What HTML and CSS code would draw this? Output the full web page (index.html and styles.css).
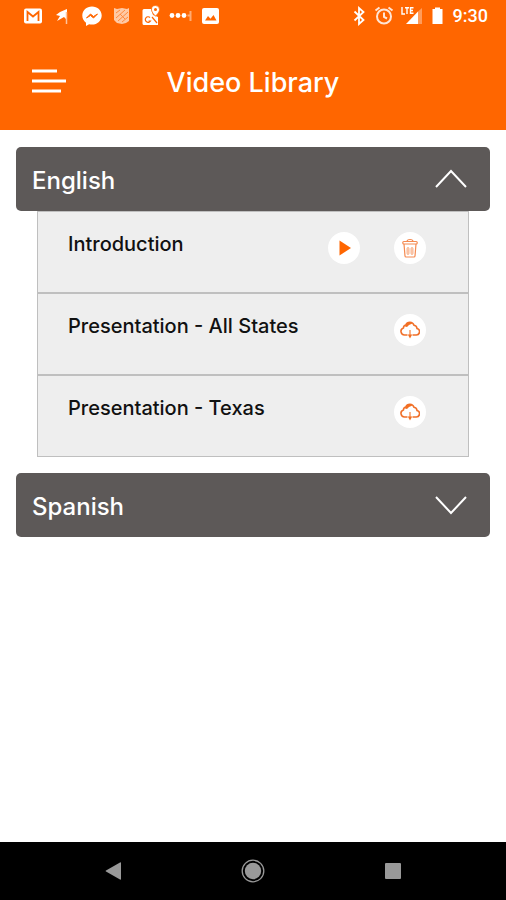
FILE: index.html
```html
<!DOCTYPE html>
<html lang="en">
<head>
<meta charset="utf-8">
<meta name="viewport" content="width=device-width, initial-scale=1">
<title>Video Library</title>
<link rel="stylesheet" href="styles.css">
</head>
<body>
<svg class="symbols" aria-hidden="true">
  <symbol id="cloud" viewBox="0 0 20 18">
    <path d="M7.500 14H4.500A3.600 3.600 0 0 1 3.400 7 3.200 3.200 0 0 1 5.800 4 4.400 4.400 0 0 1 14 4.200 3.600 3.600 0 0 1 17 7.500 3.300 3.300 0 0 1 16 14H12.500" fill="none" stroke="#f0702a" stroke-width="1.600"/>
    <path d="M5 5.500Q6.500 1 10 1.200L12.500 2.500 9 4 7 6Z" fill="#f36f21"/>
    <path d="M10 9v5" fill="none" stroke="#f58a4b" stroke-width="1.300"/>
    <path d="M7.800 13.500h4.400L10 17.500Z" fill="#f36f21"/>
  </symbol>
</svg>

<header class="top">
  <div class="status">
    <div class="status-group">
      <svg width="18" height="20" viewBox="0 0 18 20"><rect y="2.500" width="18" height="15" rx="2" fill="#fff"/><path d="M3.500 15V6L9 10.500 14.500 6V15" fill="none" stroke="#ff6600" stroke-width="1.800"/></svg>
      <svg width="16" height="20" viewBox="0 0 16 20"><path d="M6 6 13 3V14L10 11 3 15 6 10 2 9Z" fill="#fff"/><path d="M12.500 6v12" stroke="#ffc49c" stroke-width="1.500"/></svg>
      <svg width="20" height="20" viewBox="0 0 20 20"><path d="M10 .5C4.500.5.300 4.400.300 9.500c0 3 1.400 5.500 3.700 7.200V20l3.100-1.800c.9.300 1.900.4 2.900.4 5.500 0 9.700-4 9.700-9.100S15.500.5 10 .5Z" fill="#fff"/><path d="m4.500 12 4-4 3 2.500 4-2.500-4 4-3-2.500Z" fill="#ff6600" stroke="#ff6600"/></svg>
      <svg width="16" height="20" viewBox="0 0 16 20"><path d="M0 2l3 1 5-1 5 1 2-1v13l-3 2-4 1-5-1-3-3Z" fill="#ffc9a5"/><path d="M2 7l4-3M2 12l9-8M4 15 14 6M8 16l6-5M6 8l5 5" stroke="#ff8a3d" stroke-width="1"/></svg>
      <svg width="18" height="20" viewBox="0 0 18 20"><path d="M2 3h7l2 6 5 2v8H2Q.5 19 .5 17.500v-13Q.5 3 2 3Z" fill="#fff"/><path d="M8 11.500A2.800 2.800 0 1 0 8.500 15H6.500M10 11l5 6" fill="none" stroke="#ff6600" stroke-width="1.200"/><path d="M13.500-.5A4 4 0 0 0 9.500 3.500c0 3 4 6.500 4 6.500s4-3.500 4-6.500a4 4 0 0 0-4-4Z" fill="#fff" stroke="#ff6600" stroke-width=".7"/><circle cx="13.500" cy="3.500" r="1.500" fill="#ff6600"/></svg>
      <svg width="18" height="20" viewBox="0 0 18 20"><g fill="#fff"><circle cx="0" cy="9.500" r="2.400"/><circle cx="6" cy="9.500" r="2.400"/><circle cx="12" cy="9.500" r="2.400"/></g><path d="M15.500 9.500h3M18.500 5v10" stroke="#ffab73" stroke-width="2"/></svg>
      <svg width="18" height="20" viewBox="0 0 18 20"><rect y="2" width="17" height="16" rx="2" fill="#fff"/><path d="M3 14.500 6 10l2.500 2.800L11.500 9l3 5.500Z" fill="#ff6600"/></svg>
    </div>
    <div class="status-group status-right">
      <svg width="13" height="20" viewBox="0 0 13 20"><path d="m1.500 5.500 9 8.500L6 18V2l4.500 4-9 8.500" fill="none" stroke="#fff" stroke-width="1.800"/></svg>
      <svg width="16" height="20" viewBox="0 0 16 20"><g fill="none" stroke="#ffe5d5" stroke-width="2"><circle cx="8" cy="10.500" r="7"/><path d="M8 6.500V11l3 1.500M-.5 4.500l4-3M16.500 4.500l-4-3"/></g></svg>
      <svg width="20" height="20" viewBox="0 0 20 20"><path d="M16 5.500V18H4Z" fill="#fff"/><path d="M16 5.500 20 2v16h-4Z" fill="#ff9c5b"/><path d="M0 1v7h3M3 1.800h4M5 1v7M11.500 1.800H8.500v5.400h3M8.500 4.500h2.500" fill="none" stroke="#fff" stroke-width="1.400"/></svg>
      <svg width="11" height="20" viewBox="0 0 11 20"><path d="M3 1.500h5V3h2.500v15H.5V3H3Z" fill="#fff"/></svg>
      <span class="clock">9:30</span>
    </div>
  </div>
  <div class="appbar">
    <button class="menu" type="button" aria-label="Menu"><svg width="34" height="24" viewBox="0 0 34 24"><path d="M0 2h25M0 12h34M0 22h29" stroke="#fff" stroke-width="3"/></svg></button>
    <h1>Video Library</h1>
  </div>
</header>

<main>
  <section class="language">
    <h2><button class="toggle" type="button" aria-expanded="true"><span>English</span><svg width="32" height="20" viewBox="0 0 32 20"><path d="M1 18 16 2l15 16" fill="none" stroke="#fff" stroke-width="2"/></svg></button></h2>
    <ul class="videos">
      <li>
        <span class="name">Introduction</span>
        <button class="action" type="button" aria-label="Play Introduction"><svg width="20" height="18" viewBox="0 0 20 18"><path d="M5.500 1.500 17 9 5.500 16.500Z" fill="#ff6600"/></svg></button>
        <button class="action" type="button" aria-label="Delete Introduction"><svg width="16" height="20" viewBox="0 0 16 20"><g fill="none" stroke="#f58a50" stroke-width="1.200"><path d="M5 3.500C5 .8 11 .8 11 3.500"/><rect x=".8" y="3.500" width="14.400" height="2.500" rx="1"/><path d="m2 6 1 12q.1 1 1 1h8q.9 0 1-1L14 6"/></g><g fill="#fbd0b8" stroke="#f9b48f"><rect x="5" y="9.500" width="2" height="7" rx="1"/><rect x="9" y="9.500" width="2" height="7" rx="1"/></g></svg></button>
      </li>
      <li>
        <span class="name">Presentation - All States</span>
        <button class="action" type="button" aria-label="Download Presentation - All States"><svg width="20" height="18"><use href="#cloud"/></svg></button>
      </li>
      <li>
        <span class="name">Presentation - Texas</span>
        <button class="action" type="button" aria-label="Download Presentation - Texas"><svg width="20" height="18"><use href="#cloud"/></svg></button>
      </li>
    </ul>
  </section>
  <section class="language">
    <h2><button class="toggle" type="button" aria-expanded="false"><span>Spanish</span><svg width="32" height="20" viewBox="0 0 32 20"><path d="m1 2 15 16L31 2" fill="none" stroke="#fff" stroke-width="2"/></svg></button></h2>
  </section>
</main>

<nav class="system" aria-label="System">
  <button type="button" aria-label="Back"><svg width="24" height="24" viewBox="0 0 24 24"><path d="M5 11.400 19 3.500q1-.5 1 .5v16q0 1-1 .5L5 12.600q-1-.6 0-1.200Z" fill="#999"/></svg></button>
  <button type="button" aria-label="Home"><svg width="24" height="24" viewBox="0 0 24 24"><circle cx="12" cy="12" r="10.800" fill="none" stroke="#999" stroke-width="1.300"/><circle cx="12" cy="12" r="8.200" fill="#999"/></svg></button>
  <button type="button" aria-label="Recent apps"><svg width="24" height="24" viewBox="0 0 24 24"><rect x="4" y="4" width="16" height="16" rx="1" fill="#999"/></svg></button>
</nav>
</body>
</html>
```
FILE: styles.css
```css
* {
  box-sizing: border-box;
}

body {
  margin: 0;
  min-height: 100vh;
  display: flex;
  flex-direction: column;
  background: #fff;
  color: #111;
  font-family: Inter, "Open Sans", sans-serif;
}

button {
  border: 0;
  padding: 0;
  background: none;
  color: inherit;
  font: inherit;
}

svg {
  display: block;
  flex: none;
  overflow: visible;
}

.symbols {
  display: none;
}

.top {
  background: #ff6600;
  color: #fff;
}

.status {
  height: 32px;
  padding: 0 18px 0 24px;
  display: flex;
  align-items: center;
  justify-content: space-between;
}

.status-group {
  display: flex;
  align-items: center;
  gap: 12px;
}

.status-right {
  gap: 10px;
}

.clock {
  font: 500 18px/20px Roboto, sans-serif;
}

.appbar {
  height: 98px;
  padding: 0 32px;
  display: grid;
  grid-template-columns: 34px 1fr 34px;
  align-items: center;
}

h1 {
  margin: 4px 0 0;
  text-align: center;
  font-size: 27px;
  line-height: 32px;
  font-weight: 500;
}

main {
  flex: 1;
  padding: 17px 16px;
  display: flex;
  flex-direction: column;
  gap: 16px;
}

h2 {
  margin: 0;
  font-size: 24px;
  line-height: 32px;
  font-weight: 500;
}

.toggle {
  width: 100%;
  height: 64px;
  padding: 4px 23px 0 16px;
  display: flex;
  align-items: center;
  justify-content: space-between;
  border-radius: 5px;
  background: #5d5958;
  color: #fff;
}

.toggle svg {
  margin-bottom: 4px;
}

.videos {
  margin: 0 21px;
  padding: 0;
  list-style: none;
}

.videos li {
  min-height: 82px;
  padding: 20px 42px 20px 30px;
  display: flex;
  align-items: flex-start;
  gap: 34px;
  border: 1px solid #bfbfbf;
  background: #eee;
}

.name {
  flex: 1;
  font-size: 20px;
  line-height: 24px;
  font-weight: 500;
}

.action {
  width: 32px;
  height: 32px;
  display: grid;
  place-items: center;
  border-radius: 50%;
  background: #fff;
}

.system {
  height: 58px;
  padding: 0 43px;
  display: flex;
  background: #000;
}

.system button {
  flex: 1;
  display: grid;
  place-items: center;
}
```
